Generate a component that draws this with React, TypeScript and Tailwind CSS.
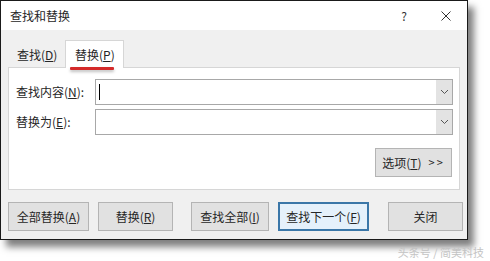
export default function App() {
  const Chevron = () => (
    <svg width="9" height="6" viewBox="0 0 9 6" className="block">
      <path d="M1 1 L4.5 4.5 L8 1" fill="none" stroke="#555" strokeWidth="1" />
    </svg>
  );
  const Combo = ({ cursor }: { cursor?: boolean }) => (
    <div className="flex-1 h-[26px] border border-[#a8a8a8] bg-white flex">
      <div className="flex-1 relative">
        {cursor && <div className="absolute left-[3px] top-[4px] w-[1px] h-[16px] bg-black" />}
      </div>
      <div className="w-[16px] bg-[#e3e3e3] flex items-center justify-center">
        <Chevron />
      </div>
    </div>
  );
  const btn =
    "h-[29px] border border-[#b4b4b4] bg-[#e1e1e1] flex items-center justify-center shrink-0";
  return (
    <div className="w-[490px] h-[261px] bg-white relative font-['Microsoft_YaHei','Noto_Sans_CJK_SC',sans-serif] text-[12px] text-[#262626] leading-none">
      <div className="w-[468px] h-[240px] border border-[#1a1a1a] bg-[#f0f0f0] flex flex-col shadow-[6px_7px_7px_rgba(0,0,0,0.5)]">
        <div className="h-[29px] bg-white flex items-center pl-[9px] pr-[16px] shrink-0">
          <span className="text-[12px]">查找和替换</span>
          <span className="ml-auto mr-[34px] text-[12px] text-[#333]">?</span>
          <svg width="10" height="10" viewBox="0 0 10 10" className="block">
            <path d="M0.5 0.5 L9.5 9.5 M9.5 0.5 L0.5 9.5" stroke="#333" strokeWidth="1" />
          </svg>
        </div>
        <div className="flex-1 px-[7px] pt-[10px] flex flex-col">
          <div className="flex items-end h-[27px]">
            <div className="w-[57px] h-[24px] pl-[9px] flex items-center">
              查找(<u>D</u>)
            </div>
            <div className="w-[59px] h-[28px] -mb-[1px] bg-white border border-b-0 border-[#d6d6d6] relative z-10 pl-[9px] flex items-center">
              替换(<u>P</u>)
              <div className="absolute left-[4px] bottom-[-2px] w-[44px] h-[3px] bg-[#d42a2a] rounded-[1px] shadow-[0_2px_3px_rgba(0,0,0,0.25)]" />
            </div>
          </div>
          <div className="h-[123px] bg-white border border-[#d6d6d6] pl-[7px] pr-[6px] pt-[11px] flex flex-col">
            <div className="flex items-center">
              <div className="w-[79px]">
                查找内容(<u>N</u>):
              </div>
              <Combo cursor />
            </div>
            <div className="flex items-center mt-[4px]">
              <div className="w-[79px]">
                替换为(<u>E</u>):
              </div>
              <Combo />
            </div>
            <div className="flex justify-end mt-[13px] pr-[1px]">
              <div className={`${btn} w-[77px] gap-[7px]`}>
                <span>
                  选项(<u>T</u>)
                </span>
                <span className="tracking-[2px] text-[11px]">&gt;&gt;</span>
              </div>
            </div>
          </div>
          <div className="flex mt-[12px]">
            <div className={`${btn} w-[81px]`}>
              全部替换(<u>A</u>)
            </div>
            <div className={`${btn} w-[75px] ml-[9px]`}>
              替换(<u>R</u>)
            </div>
            <div className={`${btn} w-[78px] ml-[18px]`}>
              查找全部(<u>I</u>)
            </div>
            <div className="h-[29px] w-[91px] ml-[9px] border-2 border-[#3b77a8] bg-[#e5f1fb] flex items-center justify-center shrink-0">
              查找下一个(<u>F</u>)
            </div>
            <div className={`${btn} w-[75px] ml-[19px]`}>关闭</div>
          </div>
        </div>
      </div>
      <div className="absolute right-[6px] bottom-[3px] text-[11px] text-[#c4c4c4]">
        头条号 / 简美科技
      </div>
    </div>
  );
}
